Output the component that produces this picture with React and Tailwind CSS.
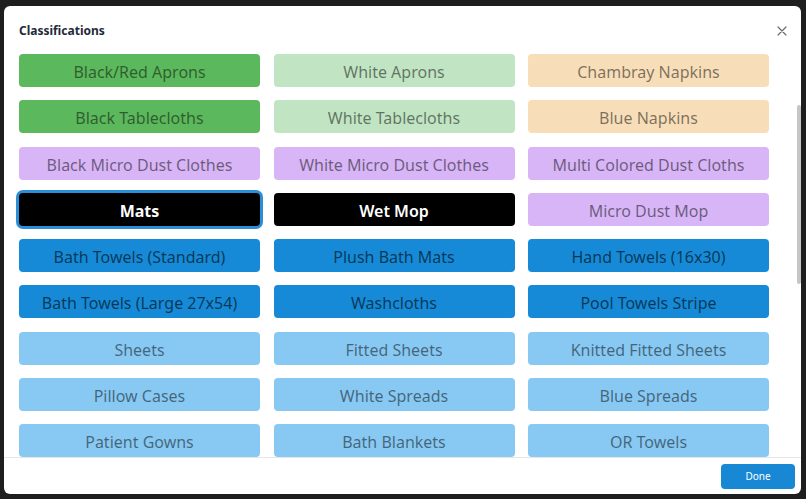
import React from "react";

const C = {
  green: "bg-[#5cb85c] text-black/50",
  lgreen: "bg-[#c1e5c3] text-black/50",
  peach: "bg-[#f8deb8] text-black/50",
  lav: "bg-[#d7b5f6] text-black/50",
  black: "bg-black text-white",
  blue: "bg-[#168ad6] text-black/60",
  lblue: "bg-[#88c9f3] text-black/50",
};

const items = [
  ["Black/Red Aprons", C.green],
  ["White Aprons", C.lgreen],
  ["Chambray Napkins", C.peach],
  ["Black Tablecloths", C.green],
  ["White Tablecloths", C.lgreen],
  ["Blue Napkins", C.peach],
  ["Black Micro Dust Clothes", C.lav],
  ["White Micro Dust Clothes", C.lav],
  ["Multi Colored Dust Cloths", C.lav],
  ["Mats", C.black + " font-bold ring-[3px] ring-[#2a8fd8]"],
  ["Wet Mop", C.black + " font-semibold"],
  ["Micro Dust Mop", C.lav],
  ["Bath Towels (Standard)", C.blue],
  ["Plush Bath Mats", C.blue],
  ["Hand Towels (16x30)", C.blue],
  ["Bath Towels (Large 27x54)", C.blue],
  ["Washcloths", C.blue],
  ["Pool Towels Stripe", C.blue],
  ["Sheets", C.lblue],
  ["Fitted Sheets", C.lblue],
  ["Knitted Fitted Sheets", C.lblue],
  ["Pillow Cases", C.lblue],
  ["White Spreads", C.lblue],
  ["Blue Spreads", C.lblue],
  ["Patient Gowns", C.lblue],
  ["Bath Blankets", C.lblue],
  ["OR Towels", C.lblue],
];

export default function App() {
  return (
    <div
      className="w-[806px] h-[499px] bg-[#1e1e1e] overflow-hidden pt-[6px] pl-[4px]"
      style={{ fontFamily: '"Noto Sans", "Open Sans", sans-serif' }}
    >
      <div className="relative w-[797px] h-[488px] bg-white rounded-[6px] flex flex-col overflow-hidden">
        <div className="h-[40px] shrink-0 flex items-center justify-between pl-[15px] pr-[13px] pt-[10px]">
          <span className="text-[12px] font-bold text-[#1f2b3a]">Classifications</span>
          <svg width="12" height="12" viewBox="0 0 12 12" className="text-[#6b6b6b]">
            <path d="M2 2L10 10M10 2L2 10" stroke="currentColor" strokeWidth="1.2" strokeLinecap="round" />
          </svg>
        </div>
        <div className="h-[411px] shrink-0 overflow-hidden pl-[15px] pt-[8px]">
          <div className="grid grid-cols-[241px_241px_241px] gap-x-[13.5px] gap-y-[13.25px]">
            {items.map(([label, cls]) => (
              <div
                key={label}
                className={`h-[33px] rounded-[4px] flex items-center justify-center pt-[3px] text-[16px] leading-none ${cls}`}
              >
                {label}
              </div>
            ))}
          </div>
        </div>
        <div className="flex-1 border-t border-[#e6e6e6] flex items-center justify-end pr-[6px]">
          <div className="w-[74px] h-[25px] rounded-[4px] bg-[#1888d4] text-white text-[10px] flex items-center justify-center">
            Done
          </div>
        </div>
        <div className="absolute right-[0px] top-[99px] w-[4px] h-[179px] rounded-full bg-[#c6c6c6]" />
      </div>
    </div>
  );
}
